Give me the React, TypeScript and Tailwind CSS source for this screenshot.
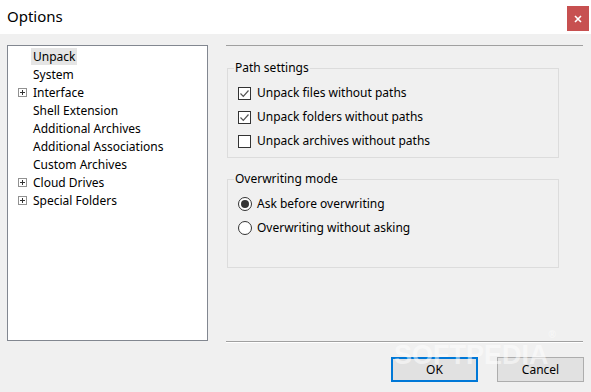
import React from "react";

const tree = [
  { label: "Unpack", plus: false, selected: true },
  { label: "System", plus: false },
  { label: "Interface", plus: true },
  { label: "Shell Extension", plus: false },
  { label: "Additional Archives", plus: false },
  { label: "Additional Associations", plus: false },
  { label: "Custom Archives", plus: false },
  { label: "Cloud Drives", plus: true },
  { label: "Special Folders", plus: true },
];

function PlusBox() {
  return (
    <span className="w-[9px] h-[9px] border border-[#919191] bg-white flex items-center justify-center">
      <svg width="7" height="7" viewBox="0 0 7 7">
        <path d="M1 3.5h5M3.5 1v5" stroke="#333" strokeWidth="1" />
      </svg>
    </span>
  );
}

function Check({ checked, label }: { checked: boolean; label: string }) {
  return (
    <div className="flex items-center h-[24px]">
      <span className="w-[13px] h-[13px] border border-[#333] bg-white flex items-center justify-center">
        {checked && (
          <svg width="11" height="11" viewBox="0 0 11 11">
            <path d="M1.5 5.5l2.8 2.8L9.5 2.5" fill="none" stroke="#555" strokeWidth="1.2" />
          </svg>
        )}
      </span>
      <span className="ml-[6px]">{label}</span>
    </div>
  );
}

function Radio({ checked, label }: { checked: boolean; label: string }) {
  return (
    <div className="flex items-center h-[24px]">
      <span className="w-[14px] h-[14px] rounded-full border border-[#333] bg-white flex items-center justify-center">
        {checked && <span className="w-[8px] h-[8px] rounded-full bg-[#333]" />}
      </span>
      <span className="ml-[5px]">{label}</span>
    </div>
  );
}

export default function App() {
  return (
    <div
      className="w-[591px] h-[392px] bg-[#f0f0f0] flex flex-col relative overflow-hidden text-[12px] text-black"
      style={{ fontFamily: '"Segoe UI", "Noto Sans", sans-serif' }}
    >
      <div className="h-[34px] bg-white flex justify-between">
        <span className="pl-[7px] pt-[6px] text-[15px] leading-[20px]">Options</span>
        <button className="mt-[6px] mr-[2px] w-[22px] h-[25px] bg-[#c75050] text-white flex items-center justify-center">
          <svg width="8" height="8" viewBox="0 0 8 8">
            <path d="M1 1l6 6M7 1l-6 6" stroke="#fff" strokeWidth="1.6" />
          </svg>
        </button>
      </div>

      <div className="flex pt-[11px] pl-[7px]">
        <div className="w-[201px] h-[296px] border border-[#828790] bg-white pt-[1px]">
          {tree.map((t) => (
            <div key={t.label} className="h-[18px] flex items-center">
              <span className="w-[23px] flex justify-end pr-[4px]">{t.plus && <PlusBox />}</span>
              <span
                className={
                  "px-[2px] leading-[17px] " + (t.selected ? "bg-[#e5e5e5]" : "")
                }
              >
                {t.label}
              </span>
            </div>
          ))}
        </div>

        <div className="ml-[18px] w-[357px] h-[297px] border-t border-[#a0a0a0] flex flex-col justify-between">
          <div className="pl-[1px] pt-[14px]">
            <fieldset className="w-[332px] h-[98px] border border-[#dcdcdc]">
              <legend className="ml-[6px] px-[1px] leading-[16px]">Path settings</legend>
              <div className="pt-[5px] pl-[10px]">
                <Check checked label="Unpack files without paths" />
                <Check checked label="Unpack folders without paths" />
                <Check checked={false} label="Unpack archives without paths" />
              </div>
            </fieldset>
            <fieldset className="mt-[13px] w-[332px] h-[97px] border border-[#dcdcdc]">
              <legend className="ml-[6px] px-[1px] leading-[16px]">Overwriting mode</legend>
              <div className="pt-[5px] pl-[10px]">
                <Radio checked label="Ask before overwriting" />
                <Radio checked={false} label="Overwriting without asking" />
              </div>
            </fieldset>
          </div>
          <div className="border-b border-[#a0a0a0] shadow-[0_1px_0_#ffffff]" />
        </div>
      </div>

      <div className="flex justify-end gap-[19px] pr-[7px] pt-[15px]">
        <button className="w-[87px] h-[25px] bg-[#e1e1e1] border-2 border-[#0078d7]">OK</button>
        <button className="w-[87px] h-[25px] bg-[#e1e1e1] border border-[#adadad]">Cancel</button>
      </div>

      <span
        className="absolute left-[394px] top-[340px] text-[27px] leading-[30px] font-bold text-white/50 pointer-events-none"
        style={{ fontFamily: '"Liberation Sans", sans-serif' }}
      >
        SOFTPEDIA<sup className="text-[10px] align-top">®</sup>
      </span>
    </div>
  );
}
